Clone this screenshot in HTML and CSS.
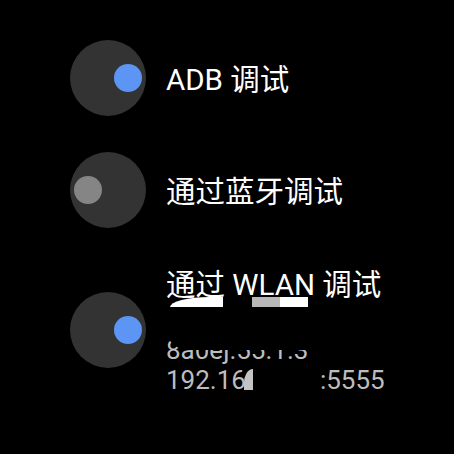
FILE: index.html
```html
<!DOCTYPE html>
<html lang="zh">
<head>
<meta charset="utf-8">
<link rel="stylesheet" href="styles.css">
</head>
<body>
<div class="list">
  <div class="row">
    <div class="toggle"><span class="knob on"></span></div>
    <div class="text"><div class="title">ADB 调试</div></div>
  </div>
  <div class="row">
    <div class="toggle"><span class="knob off"></span></div>
    <div class="text"><div class="title">通过蓝牙调试</div></div>
  </div>
  <div class="row">
    <div class="toggle"><span class="knob on"></span></div>
    <div class="text">
      <div class="title">通过 WLAN 调试</div>
      <div class="sub">
        <div class="line hidden">(</div>
        <div class="line">8a0ej.55.1.3</div>
        <div class="line">192.16<span class="mask"><span class="sliver"></span></span>:5555</div>
        <span class="redact white1"></span>
        <span class="redact grey2"></span>
        <span class="redact white2"></span>
        <span class="redact blob"></span>
      </div>
    </div>
  </div>
</div>
</body>
</html>
```
FILE: styles.css
```css
html, body {
  margin: 0;
  padding: 0;
  background: #000;
  width: 454px;
  height: 454px;
  overflow: hidden;
}
body {
  font-family: Roboto, "Noto Sans CJK SC", sans-serif;
  color: #fff;
}
.list {
  display: flex;
  flex-direction: column;
  gap: 36px;
  padding-top: 40px;
  padding-left: 70px;
}
.row {
  display: flex;
  align-items: center;
  gap: 20px;
}
.toggle {
  width: 76px;
  height: 76px;
  border-radius: 50%;
  background: #333333;
  position: relative;
  flex: none;
}
.knob {
  position: absolute;
  top: 24px;
  width: 28px;
  height: 28px;
  border-radius: 50%;
}
.knob.on { left: 44px; background: #5c95f3; }
.knob.off { left: 4px; background: #858585; }
.title {
  font-size: 29.5px;
  line-height: 36px;
  white-space: nowrap;
  padding-top: 3px;
}
.sub {
  position: relative;
  margin-top: 2px;
  font-size: 26px;
  line-height: 30px;
  color: #bdbdbd;
  white-space: nowrap;
}
.line.hidden { color: #000; }
.mask {
  display: inline-block;
  width: 74px;
  height: 20px;
  position: relative;
}
.sliver {
  position: absolute;
  left: -2px;
  top: 0;
  width: 9px;
  height: 21px;
  background: #c4c4c4;
  border-top-left-radius: 9px 14px;
}
.redact {
  position: absolute;
  display: block;
}
.white1 {
  left: 4px; top: -8px; width: 53px; height: 10px;
  background: #fff;
  border-top-left-radius: 40px 10px;
}
.grey2 {
  left: 86px; top: -8px; width: 28px; height: 10px;
  background: #b8b8b8;
}
.white2 {
  left: 114px; top: -8px; width: 28px; height: 10px;
  background: #fff;
}
.blob {
  left: 0; top: 2px; width: 145px; height: 43px;
  background: #000;
  border-radius: 22px 0 0 22px;
}
```
